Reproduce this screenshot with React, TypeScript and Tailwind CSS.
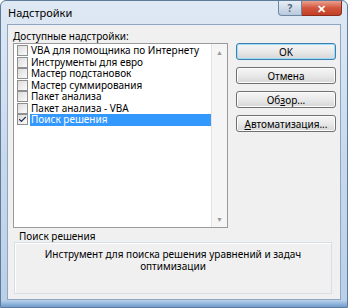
import { Check } from "lucide-react";

const addins = [
  { name: "VBA для помощника по Интернету", on: false },
  { name: "Инструменты для евро", on: false },
  { name: "Мастер подстановок", on: false },
  { name: "Мастер суммирования", on: false },
  { name: "Пакет анализа", on: false },
  { name: "Пакет анализа - VBA", on: false },
  { name: "Поиск решения", on: true },
];

function CheckBox({ on }: { on: boolean }) {
  return (
    <span className="flex h-[11px] w-[11px] shrink-0 items-center justify-center border border-[#8f8f8f] bg-gradient-to-br from-[#dcdcdc] to-[#fbfbfb]">
      {on && <Check size={9} strokeWidth={3} className="text-[#2a2a4a]" />}
    </span>
  );
}

function DlgButton({ label, primary }: { label: React.ReactNode; primary?: boolean }) {
  return (
    <button
      className={
        "h-[17px] w-[100px] whitespace-nowrap rounded-[3px] border bg-gradient-to-b from-[#f6f6f6] via-[#e9e9e9] to-[#d6d6d6] text-[10px] leading-none text-black " +
        (primary ? "border-[#3c7fb1] shadow-[inset_0_0_0_1px_#9fdcf7]" : "border-[#707070] shadow-[inset_0_0_0_1px_#fcfcfc]")
      }
    >
      {label}
    </button>
  );
}

export default function App() {
  return (
    <div
      className="flex h-[308px] w-[348px] flex-col overflow-hidden rounded-t-[6px] border border-[#5f7b9a] bg-gradient-to-b from-[#dfe9f4] via-[#c9d9ec] to-[#b9cfe8] text-black"
      style={{ fontFamily: '"Noto Sans", "Open Sans", sans-serif' }}
    >
      {/* title bar */}
      <div className="flex h-[23px] shrink-0 items-start justify-between">
        <span className="pl-[7px] pt-[4px] text-[11px] leading-[16px]">Надстройки</span>
        <div className="flex pr-[5px]">
          <div className="flex h-[15px] w-[24px] items-center justify-center rounded-bl-[4px] border border-t-0 border-[#6d87a3] bg-gradient-to-b from-[#e8eef6] to-[#b9c9dc] text-[10px] font-bold leading-none text-[#4f6580]">
            ?
          </div>
          <div className="flex h-[15px] w-[40px] items-center justify-center rounded-br-[4px] border border-l-0 border-t-0 border-[#8a2d20] bg-gradient-to-b from-[#e9a08e] via-[#d2553d] to-[#c13f25] text-[11px] font-bold leading-none text-white">
            ✕
          </div>
        </div>
      </div>

      {/* client area */}
      <div className="mx-[6px] flex flex-1 flex-col border border-[#8ea6c2] bg-[#f0f0f0] pl-[5px] pt-[4px]">
        <div className="flex">
          <div className="flex w-[215px] flex-col">
            <span className="text-[10px] leading-[14px]">Доступные надстройки:</span>
            <div className="flex h-[185px] border border-[#9a9a9a] bg-white">
              <ul className="flex-1 pl-[3px] pt-[1px]">
                {addins.map((a) => (
                  <li key={a.name} className="flex h-[11.5px] items-center gap-[2px] whitespace-nowrap text-[10px] leading-[11px]">
                    <CheckBox on={a.on} />
                    <span className={"flex h-full flex-1 items-center pl-[1px] " + (a.on ? "bg-[#3399ff] text-white" : "")}>
                      {a.name}
                    </span>
                  </li>
                ))}
              </ul>
              <div className="flex w-[16px] flex-col items-center justify-between border-l border-[#e3e3e3] bg-[#f5f5f5] pb-[4px] pt-[5px] text-[7px] leading-none text-[#9a9a9a]">
                <span>▲</span>
                <span>▼</span>
              </div>
            </div>
          </div>

          <div className="ml-[8px] mt-[14px] flex flex-col gap-[7px]">
            <DlgButton label="OK" primary />
            <DlgButton label="Отмена" />
            <DlgButton
              label={
                <>
                  Об<span className="underline">з</span>ор...
                </>
              }
            />
            <DlgButton
              label={
                <>
                  <span className="underline">А</span>втоматизация...
                </>
              }
            />
          </div>
        </div>

        <span className="mt-[3px] pl-[6px] text-[10px] leading-[10px]">Поиск решения</span>
        <div className="mr-[8px] ml-[1px] mt-[1px] h-[52px] border border-[#d5dfe5] px-[10px] pt-[5px] text-center text-[10px] leading-[12px] shadow-[inset_1px_1px_0_#ffffff]">
          Инструмент для поиска решения уравнений и задач
          <br />
          оптимизации
        </div>
      </div>
      <div className="h-[7px] shrink-0 bg-gradient-to-b from-[#bcd2ea] to-[#6f9ccc]" />
    </div>
  );
}
